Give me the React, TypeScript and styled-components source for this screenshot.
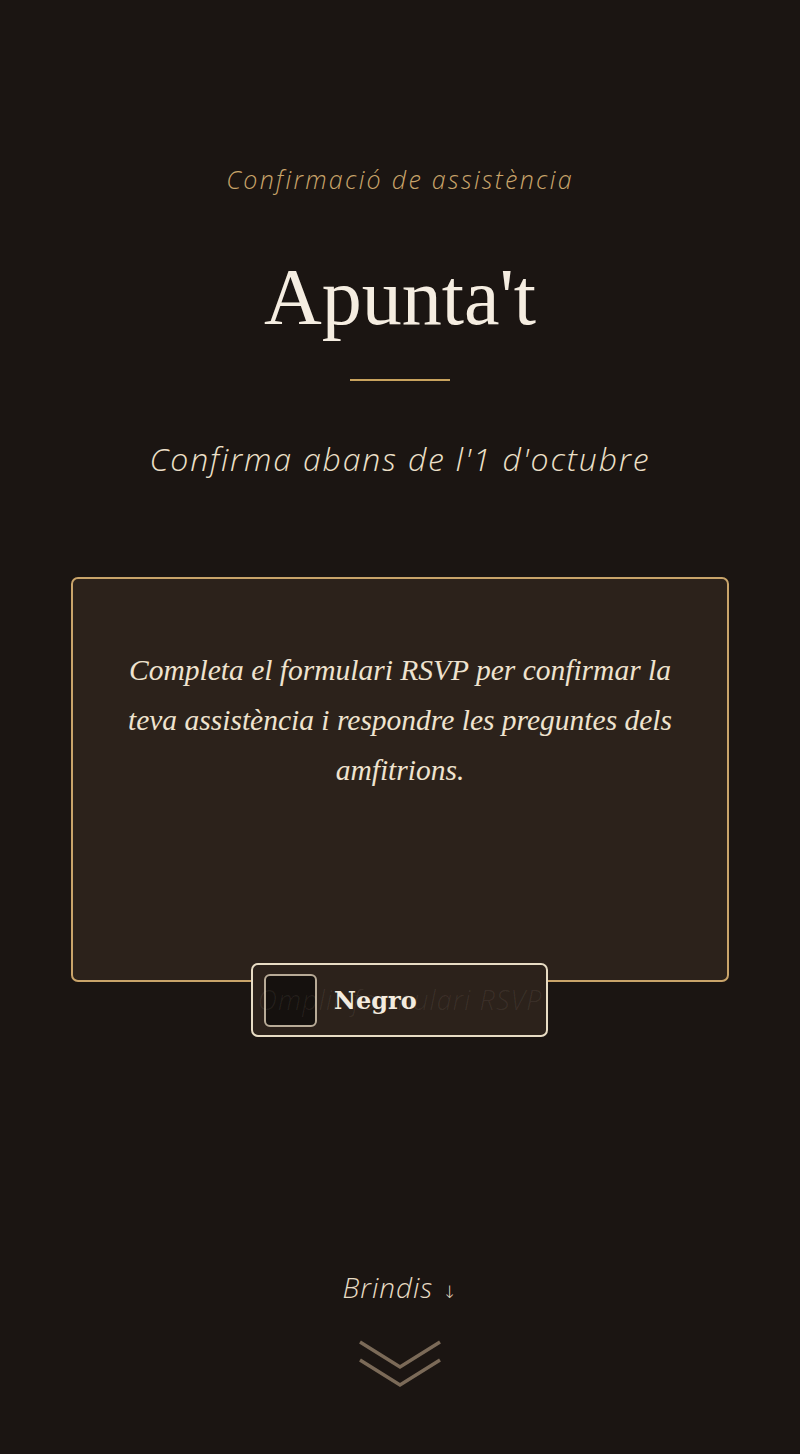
import { createGlobalStyle } from 'styled-components';
import styled from 'styled-components';

const GlobalStyle = createGlobalStyle`
  html, body {
    margin: 0;
    padding: 0;
    background: #1b1512;
  }
  #root {
    min-height: 1454px;
    background: #1b1512;
  }
`;

const Page = styled.main`
  display: flex;
  flex-direction: column;
  align-items: center;
  padding: 164px 71px 60px;
  color: #f3ebdf;
`;

const Eyebrow = styled.div`
  font-family: "Open Sans", Lato, sans-serif;
  font-style: italic;
  font-weight: 300;
  font-size: 25px;
  line-height: 30px;
  letter-spacing: 2.3px;
  color: #c9a46a;
`;

const Title = styled.h1`
  margin: 64px 0 0;
  font-family: "Liberation Serif", serif;
  font-weight: 400;
  font-size: 80px;
  line-height: 78px;
  color: #f5ede1;
`;

const Divider = styled.div`
  margin-top: 43px;
  width: 100px;
  height: 2px;
  background: #c9a35e;
`;

const Subtitle = styled.p`
  margin: 58px 0 0;
  font-family: "Open Sans", Lato, sans-serif;
  font-style: italic;
  font-weight: 300;
  font-size: 32px;
  line-height: 40px;
  letter-spacing: 1.85px;
  color: #ede0c9;
`;

const Card = styled.section`
  margin-top: 98px;
  box-sizing: border-box;
  width: 658px;
  height: 405px;
  padding: 66px 40px 0;
  border: 2px solid #c9a46a;
  border-radius: 7px;
  background: #2c221b;
`;

const CardText = styled.p`
  margin: 0;
  text-align: center;
  font-family: "Liberation Serif", serif;
  font-style: italic;
  font-size: 29.5px;
  line-height: 50px;
  color: #efe3cf;
`;

const ButtonRow = styled.div`
  position: relative;
  display: flex;
  justify-content: center;
  width: 100%;
`;

const GhostLabel = styled.span`
  position: relative;
  z-index: 1;
  font-family: "Open Sans", Lato, sans-serif;
  font-style: italic;
  font-weight: 300;
  font-size: 27px;
  line-height: 36px;
  letter-spacing: 1.1px;
  color: rgba(255, 240, 220, 0.07);
`;

const ColorChip = styled.div`
  position: absolute;
  top: -19px;
  left: 50%;
  margin-left: -149px;
  box-sizing: border-box;
  width: 297px;
  height: 74px;
  display: flex;
  align-items: center;
  gap: 17px;
  padding: 0 11px;
  border: 2px solid #e8dcc4;
  border-radius: 7px;
  background: #2c221b;
`;

const Swatch = styled.div<{ $color: string }>`
  box-sizing: border-box;
  width: 53px;
  height: 53px;
  border: 2px solid #b8ab97;
  border-radius: 6px;
  background: ${(p) => p.$color};
`;

const ChipName = styled.span`
  position: relative;
  z-index: 2;
  font-family: "DejaVu Serif", serif;
  font-weight: 600;
  font-size: 24px;
  color: #f3ebdf;
`;

const NextLink = styled.div`
  margin-top: 252px;
  display: flex;
  align-items: baseline;
  gap: 9px;
  font-family: "Open Sans", Lato, sans-serif;
  font-style: italic;
  font-weight: 300;
  font-size: 28px;
  line-height: 34px;
  letter-spacing: 1px;
  color: #e8dcc4;
`;

const Arrow = styled.span`
  font-style: normal;
  font-family: "DejaVu Sans", sans-serif;
  font-size: 17px;
`;

const Chevrons = styled.svg`
  margin-top: 31px;
  display: block;
`;

export default function App() {
  return (
    <>
      <GlobalStyle />
      <Page>
        <Eyebrow>Confirmació de assistència</Eyebrow>
        <Title>Apunta't</Title>
        <Divider />
        <Subtitle>Confirma abans de l'1 d'octubre</Subtitle>
        <Card>
          <CardText>
            Completa el formulari RSVP per confirmar la teva assistència i respondre les preguntes dels amfitrions.
          </CardText>
        </Card>
        <ButtonRow>
          <GhostLabel>Omplir formulari RSVP</GhostLabel>
          <ColorChip>
            <Swatch $color="#15110e" />
            <ChipName>Negro</ChipName>
          </ColorChip>
        </ButtonRow>
        <NextLink>
          Brindis <Arrow>↓</Arrow>
        </NextLink>
        <Chevrons width="84" height="50" viewBox="0 0 84 50">
          <polyline points="2,2 42,27 82,2" fill="none" stroke="#7b6a58" strokeWidth="3.5" />
          <polyline points="2,20 42,45 82,20" fill="none" stroke="#7b6a58" strokeWidth="3.5" />
        </Chevrons>
      </Page>
    </>
  );
}
